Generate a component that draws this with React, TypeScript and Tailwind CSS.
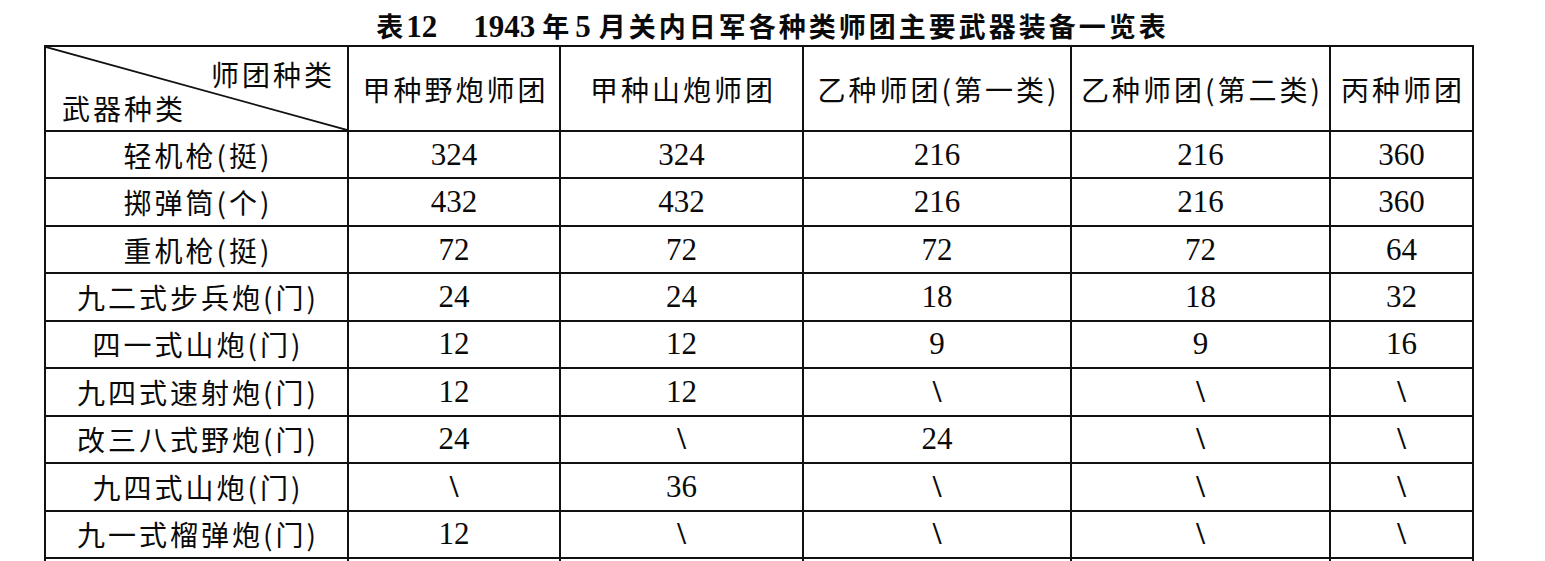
const cols = ['甲种野炮师团', '甲种山炮师团', '乙种师团(第一类)', '乙种师团(第二类)', '丙种师团'];

const rows: [string, string[]][] = [
  ['轻机枪(挺)', ['324', '324', '216', '216', '360']],
  ['掷弹筒(个)', ['432', '432', '216', '216', '360']],
  ['重机枪(挺)', ['72', '72', '72', '72', '64']],
  ['九二式步兵炮(门)', ['24', '24', '18', '18', '32']],
  ['四一式山炮(门)', ['12', '12', '9', '9', '16']],
  ['九四式速射炮(门)', ['12', '12', '\\', '\\', '\\']],
  ['改三八式野炮(门)', ['24', '\\', '24', '\\', '\\']],
  ['九四式山炮(门)', ['\\', '36', '\\', '\\', '\\']],
  ['九一式榴弹炮(门)', ['12', '\\', '\\', '\\', '\\']],
  ['', ['', '', '', '', '']],
];

const cell = 'border-r-2 border-b-2 border-[#111] flex items-center justify-center';
const cjk = "font-['Noto_Sans_CJK_SC',sans-serif] text-[28px] leading-[28px] tracking-[3px]";
const num = "font-['Liberation_Serif','Noto_Sans_CJK_SC',serif] text-[31px] leading-[30px]";

export default function App() {
  return (
    <div className="w-[1545px] h-[561px] overflow-hidden bg-white text-[#0a0a0a]">
      {/* 标题 */}
      <h1 className="h-[45px] pt-[12px] text-center font-['Noto_Sans_CJK_SC',sans-serif] text-[27px] leading-[27px] font-bold tracking-[3px]">
        表
        <span className="font-['Liberation_Serif',serif] text-[31px] tracking-normal">12</span>
        <span className="ml-[36px] font-['Liberation_Serif',serif] text-[31px] tracking-normal">1943</span>
        <span className="ml-[7px]">年</span>
        <span className="ml-[3px] font-['Liberation_Serif',serif] text-[31px] tracking-normal">5</span>
        <span className="ml-[8px]">月关内日军各种类师团主要武器装备一览表</span>
      </h1>

      {/* 表格 */}
      <div className="ml-[44px] w-max grid grid-cols-[303px_212px_243px_268px_259px_143px] grid-rows-[85px_repeat(10,47.44px)] border-l-2 border-t-2 border-[#111]">
        <div className="relative border-r-2 border-b-2 border-[#111] flex flex-col gap-[6px] pt-[13px] pl-[16px] pr-[12px]">
          <svg className="absolute inset-0 w-full h-full" preserveAspectRatio="none">
            <line x1="0" y1="0" x2="100%" y2="100%" stroke="#111" strokeWidth="1.8" />
          </svg>
          <div className={`${cjk} text-right`}>师团种类</div>
          <div className={cjk}>武器种类</div>
        </div>
        {cols.map((c) => (
          <div key={c} className={cell}>
            <span className={`${cjk} pl-[3px]`}>{c}</span>
          </div>
        ))}

        {rows.map(([name, vals], i) => (
          <div key={i} className="contents">
            <div className={cell}>
              <span className={`${cjk} pl-[3px]`}>{name}</span>
            </div>
            {vals.map((v, j) => (
              <div key={j} className={cell}>
                <span className={v === '\\' ? `${num} font-bold` : num}>{v}</span>
              </div>
            ))}
          </div>
        ))}
      </div>
    </div>
  );
}
